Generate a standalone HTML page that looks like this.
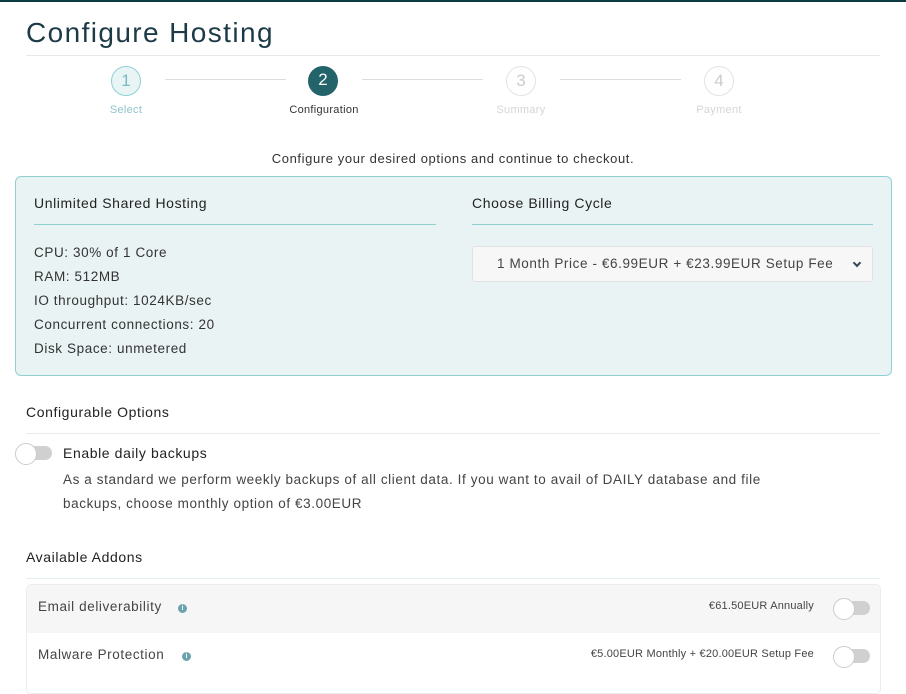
<!DOCTYPE html>
<html><head><meta charset="utf-8"><style>
*{margin:0;padding:0;box-sizing:border-box}
body{width:906px;height:685px;overflow:hidden;background:#fff;font-family:"Liberation Sans",sans-serif;color:#333;position:relative;letter-spacing:0.6px}
.a{position:absolute;white-space:nowrap}
.c{position:absolute;width:30px;height:30px;border-radius:50%;top:66px;font-size:17px;text-align:center;line-height:28px;letter-spacing:0}
.ln{position:absolute;top:79px;height:1px;background:#ddd;width:121px}
.lb{position:absolute;top:104px;font-size:11px;width:120px;text-align:center;letter-spacing:0.3px}
.tg{position:absolute;width:36px;height:14px;border-radius:7px;background:#d0d0d0}
.tg:before{content:"";position:absolute;left:-1px;top:-3px;width:20px;height:20px;border-radius:50%;background:#fff;border:1px solid #ccc}
.info{position:absolute;width:9px;height:9px;border-radius:50%;background:#6aa3ad;color:#fff;font-size:7px;line-height:9px;text-align:center;font-weight:bold;letter-spacing:0}
</style></head><body>
<div class="a" style="left:0;top:0;width:906px;height:2px;background:#0d3a40"></div>
<div class="a" style="left:26px;top:17px;font-size:28px;color:#1d3b47;letter-spacing:1.4px">Configure Hosting</div>
<div class="a" style="left:26px;top:55px;width:854px;height:1px;background:#e8e8e8"></div>

<div class="c" style="left:111px;background:#e9f4f5;border:1px solid #8fd0d3;color:#7bb9c0">1</div>
<div class="c" style="left:308px;background:#23636a;color:#fff">2</div>
<div class="c" style="left:506px;border:1px solid #e3e3e3;color:#ccc">3</div>
<div class="c" style="left:704px;border:1px solid #e3e3e3;color:#ccc">4</div>
<div class="ln" style="left:165px"></div>
<div class="ln" style="left:362px"></div>
<div class="ln" style="left:560px"></div>
<div class="lb" style="left:66px;color:#8fc3ca">Select</div>
<div class="lb" style="left:264px;color:#333">Configuration</div>
<div class="lb" style="left:461px;color:#d5d5d5">Summary</div>
<div class="lb" style="left:659px;color:#d5d5d5">Payment</div>

<div class="a" style="left:0;width:906px;top:151px;text-align:center;font-size:13px;color:#333">Configure your desired options and continue to checkout.</div>

<div class="a" style="left:15px;top:176px;width:877px;height:200px;background:#eaf3f4;border:1px solid #8fd0d1;border-radius:6px"></div>
<div class="a" style="left:34px;top:195px;font-size:14px;color:#222">Unlimited Shared Hosting</div>
<div class="a" style="left:34px;top:224px;width:402px;height:1px;background:#8fd0d1"></div>
<div class="a" style="left:34px;top:241px;font-size:13.5px;line-height:24px;color:#333">CPU: 30% of 1 Core<br>RAM: 512MB<br>IO throughput: 1024KB/sec<br>Concurrent connections: 20<br>Disk Space: unmetered</div>
<div class="a" style="left:472px;top:195px;font-size:14px;color:#222">Choose Billing Cycle</div>
<div class="a" style="left:472px;top:224px;width:401px;height:1px;background:#8fd0d1"></div>
<div class="a" style="left:472px;top:246px;width:401px;height:36px;background:#f7f7f7;border:1px solid #e2e2e2;border-radius:3px;font-size:13.5px;color:#444;line-height:34px;padding-left:24px">1 Month Price - €6.99EUR + €23.99EUR Setup Fee<span style="position:absolute;right:12px;top:13px;width:6px;height:6px;border-right:2px solid #345;border-bottom:2px solid #345;transform:rotate(45deg)"></span></div>

<div class="a" style="left:26px;top:404px;font-size:14px;color:#222">Configurable Options</div>
<div class="a" style="left:26px;top:433px;width:854px;height:1px;background:#eaeaea"></div>
<div class="tg" style="left:16px;top:446px"></div>
<div class="a" style="left:63px;top:445px;font-size:14px;color:#222">Enable daily backups</div>
<div class="a" style="left:63px;top:468px;font-size:13.5px;line-height:24px;color:#444">As a standard we perform weekly backups of all client data. If you want to avail of DAILY database and file<br>backups, choose monthly option of €3.00EUR</div>

<div class="a" style="left:26px;top:549px;font-size:14px;color:#222">Available Addons</div>
<div class="a" style="left:26px;top:578px;width:854px;height:1px;background:#e4f0f1"></div>
<div class="a" style="left:26px;top:584px;width:855px;height:110px;border:1px solid #e8eef0;border-radius:5px;background:#fff;overflow:hidden">
<div style="height:48px;background:#f6f6f6"></div></div>
<div class="a" style="left:38px;top:599px;font-size:13.5px;color:#444">Email deliverability</div>
<div class="info" style="left:178px;top:604px">i</div>
<div class="a" style="left:38px;top:647px;font-size:13.5px;color:#444">Malware Protection</div>
<div class="info" style="left:182px;top:652px">i</div>
<div class="a" style="right:92px;top:600px;font-size:11px;color:#444;letter-spacing:0.2px">€61.50EUR Annually</div>
<div class="a" style="right:92px;top:648px;font-size:11px;color:#444;letter-spacing:0.2px">€5.00EUR Monthly + €20.00EUR Setup Fee</div>
<div class="tg" style="left:834px;top:601px"></div>
<div class="tg" style="left:834px;top:649px"></div>
</body></html>
